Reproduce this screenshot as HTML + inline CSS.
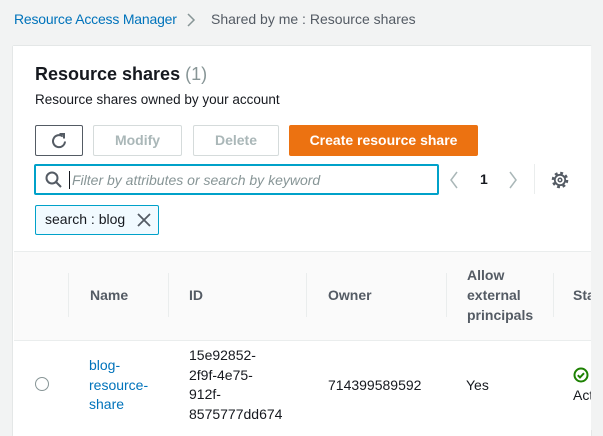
<!DOCTYPE html><html><head><style>
body{margin:0;width:603px;height:430px;overflow:hidden;background:#f2f3f3;font-family:"Liberation Sans",sans-serif;position:relative;color:#16191f}
.a{position:absolute;white-space:nowrap}
.btn{position:absolute;box-sizing:border-box;border:1px solid #d5dbdb;border-radius:2px;background:#fff;color:#aab7b8;font-weight:bold;font-size:14px;text-align:center;line-height:29px;height:31px}
.th{position:absolute;font-weight:bold;font-size:14px;color:#545b64;line-height:20px}
.sep{position:absolute;width:1px;background:#eaeded;top:273px;height:44px}
.td{position:absolute;font-size:14px;line-height:19.5px}
</style></head><body>
<div class="a" style="left:14px;top:11px;font-size:14px;color:#0073bb;letter-spacing:-0.2px">Resource Access Manager</div>
<svg class="a" style="left:186px;top:13px" width="10" height="14"><path d="M2 1l6 6-6 6" fill="none" stroke="#879596" stroke-width="1.5"/></svg>
<div class="a" style="left:211px;top:11px;font-size:14px;color:#545b64">Shared by me : Resource shares</div>
<div class="a" style="left:13px;top:46px;width:578px;height:390px;background:#fff;box-shadow:0 0 1px #aab7b8"></div>
<div class="a" style="left:14px;top:251px;width:577px;height:88px;background:#fafafa;border-top:1px solid #eaeded;border-bottom:1px solid #eaeded"></div>
<div class="a" style="left:35px;top:64px;font-size:18px;font-weight:bold">Resource shares <span style="font-weight:normal;color:#879596">(1)</span></div>
<div class="a" style="left:35px;top:92px;font-size:13.5px">Resource shares owned by your account</div>
<div class="btn" style="left:35px;top:125px;width:48px;border-color:#545b64"><svg width="20" height="20" style="margin-top:5px"><path d="M16 10.5a6 6 0 1 1-2.2-5" fill="none" stroke="#545b64" stroke-width="2"/><path d="M10.5 3h4.5v4.5" fill="none" stroke="#545b64" stroke-width="2"/></svg></div>
<div class="btn" style="left:93px;top:125px;width:89px">Modify</div>
<div class="btn" style="left:193px;top:125px;width:86px">Delete</div>
<div class="btn" style="left:289px;top:125px;width:189px;background:#ec7211;border-color:#ec7211;color:#fff">Create resource share</div>
<div class="a" style="left:34px;top:164px;width:405px;height:31px;border:2px solid #00a1c9;border-radius:2px;box-sizing:border-box"></div>
<svg class="a" style="left:45px;top:171px" width="18" height="18"><circle cx="7" cy="7" r="5.5" fill="none" stroke="#545b64" stroke-width="2"/><path d="M11 11l5 5" stroke="#545b64" stroke-width="2"/></svg>
<div class="a" style="left:69px;top:171px;width:1px;height:18px;background:#16191f"></div>
<div class="a" style="left:72px;top:172px;font-size:14px;font-style:italic;color:#879596">Filter by attributes or search by keyword</div>
<svg class="a" style="left:448px;top:171px" width="12" height="18"><path d="M9 1L3 9l6 8" fill="none" stroke="#aab7b8" stroke-width="1.5"/></svg>
<div class="a" style="left:480px;top:171px;font-size:14px;font-weight:bold">1</div>
<svg class="a" style="left:507px;top:171px" width="12" height="18"><path d="M3 1l6 8-6 8" fill="none" stroke="#aab7b8" stroke-width="1.5"/></svg>
<div class="a" style="left:534px;top:164px;width:1px;height:30px;background:#eaeded"></div>
<svg class="a" style="left:550px;top:170px" width="20" height="20" viewBox="0 0 20 20"><circle cx="10" cy="10" r="7" fill="none" stroke="#545b64" stroke-width="2.6" stroke-dasharray="2.8 2.7"/><circle cx="10" cy="10" r="5.2" fill="none" stroke="#545b64" stroke-width="1.8"/><circle cx="10" cy="10" r="1.8" fill="none" stroke="#545b64" stroke-width="1.5"/></svg>
<div class="a" style="left:35px;top:205px;width:124px;height:30px;box-sizing:border-box;border:1px solid #00a1c9;background:#f1faff;border-radius:2px"></div>
<div class="a" style="left:45px;top:211px;font-size:14px">search : blog</div>
<svg class="a" style="left:137px;top:213px" width="14" height="14"><path d="M1 1l12 12M13 1L1 13" stroke="#545b64" stroke-width="1.8"/></svg>
<div class="sep" style="left:68px"></div><div class="sep" style="left:168px"></div><div class="sep" style="left:306px"></div><div class="sep" style="left:446px"></div><div class="sep" style="left:553px"></div>
<div class="th" style="left:90px;top:285px">Name</div>
<div class="th" style="left:189px;top:285px">ID</div>
<div class="th" style="left:328px;top:285px">Owner</div>
<div class="th" style="left:467px;top:265px">Allow<br>external<br>principals</div>
<div class="th" style="left:573px;top:285px">Sta</div>
<div class="a" style="left:35px;top:377px;width:12px;height:12px;border:1px solid #879596;border-radius:50%"></div>
<div class="td" style="left:89px;top:356px;color:#0073bb">blog-<br>resource-<br>share</div>
<div class="td" style="left:189px;top:346px">15e92852-<br>2f9f-4e75-<br>912f-<br>8575777dd674</div>
<div class="td" style="left:328px;top:376px">714399589592</div>
<div class="td" style="left:466px;top:376px">Yes</div>
<svg class="a" style="left:573px;top:367px" width="16" height="16"><circle cx="8" cy="8" r="6.5" fill="none" stroke="#1d8102" stroke-width="2"/><path d="M4.8 8.2l2.2 2.2 4-4.2" fill="none" stroke="#1d8102" stroke-width="2"/></svg>
<div class="td" style="left:573px;top:386px">Act</div>
<div class="a" style="left:591px;top:46px;width:12px;height:384px;background:#f2f3f3"></div>
</body></html>
